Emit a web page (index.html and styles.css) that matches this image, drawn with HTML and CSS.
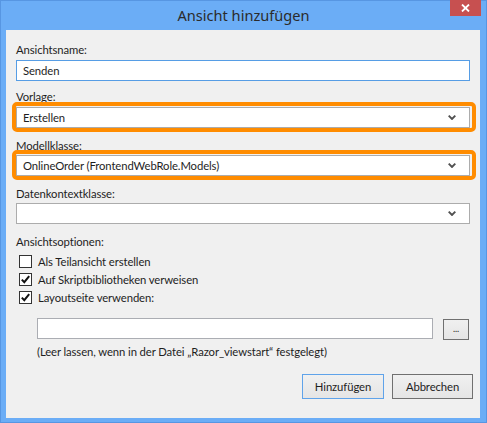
FILE: index.html
```html
<!DOCTYPE html>
<html lang="de">
<head>
<meta charset="utf-8">
<title>Ansicht hinzufügen</title>
<link rel="stylesheet" href="styles.css">
</head>
<body>
<div class="window">
  <div class="titlebar">
    <span class="spacer"></span>
    <div class="title">Ansicht hinzufügen</div>
    <div class="close">
      <svg width="9" height="8" viewBox="0 0 9 8"><path d="M1 0.5 L8 7.5 M8 0.5 L1 7.5" stroke="#fff" stroke-width="1.8" fill="none"/></svg>
    </div>
  </div>
  <div class="panel">
    <div class="lbl l-first">Ansichtsname:</div>
    <div class="textbox focused">Senden</div>

    <div class="lbl l-after-input">Vorlage:</div>
    <div class="combo hl">
      <span class="combo-text">Erstellen</span>
      <svg class="chev" width="8" height="5" viewBox="0 0 8 5"><polyline points="0.7,0.7 4,4 7.3,0.7" stroke="#505050" stroke-width="1.9" fill="none"/></svg>
    </div>

    <div class="lbl l-after-combo">Modellklasse:</div>
    <div class="combo hl">
      <span class="combo-text">OnlineOrder (FrontendWebRole.Models)</span>
      <svg class="chev" width="8" height="5" viewBox="0 0 8 5"><polyline points="0.7,0.7 4,4 7.3,0.7" stroke="#505050" stroke-width="1.9" fill="none"/></svg>
    </div>

    <div class="lbl l-after-combo">Datenkontextklasse:</div>
    <div class="combo plain">
      <span class="combo-text"></span>
      <svg class="chev" width="8" height="5" viewBox="0 0 8 5"><polyline points="0.7,0.7 4,4 7.3,0.7" stroke="#505050" stroke-width="1.9" fill="none"/></svg>
    </div>

    <div class="lbl l-after-combo">Ansichtsoptionen:</div>
    <div class="checks">
      <div class="check-row">
        <span class="box"></span>
        <span class="check-label">Als Teilansicht erstellen</span>
      </div>
      <div class="check-row">
        <span class="box"><svg width="11" height="11" viewBox="0 0 11 11"><polyline points="1.8,5.6 4.3,8.2 9.2,2.2" stroke="#111" stroke-width="2" fill="none"/></svg></span>
        <span class="check-label">Auf Skriptbibliotheken verweisen</span>
      </div>
      <div class="check-row">
        <span class="box"><svg width="11" height="11" viewBox="0 0 11 11"><polyline points="1.8,5.6 4.3,8.2 9.2,2.2" stroke="#111" stroke-width="2" fill="none"/></svg></span>
        <span class="check-label">Layoutseite verwenden:</span>
      </div>
    </div>

    <div class="path-row">
      <div class="textbox path"></div>
      <div class="btn browse">...</div>
    </div>
    <div class="note">(Leer lassen, wenn in der Datei „Razor_viewstart“ festgelegt)</div>

    <div class="actions">
      <div class="btn action default">Hinzufügen</div>
      <div class="btn action">Abbrechen</div>
    </div>
  </div>
</div>
</body>
</html>
```
FILE: styles.css
```css
html, body {
  margin: 0;
  padding: 0;
  background: #ffffff;
}

.window {
  width: 487px;
  height: 423px;
  box-sizing: border-box;
  background: #6badf6;
  border: 1px solid #5796e2;
  display: flex;
  flex-direction: column;
  font-family: Lato, "Noto Sans", sans-serif;
  color: #1e1e1e;
}

.titlebar {
  height: 29px;
  flex: none;
  display: grid;
  grid-template-columns: 1fr auto 1fr;
}

.title {
  font-family: "Noto Sans", "Open Sans", sans-serif;
  font-size: 14.6px;
  line-height: 29px;
  color: #2b2b2b;
  white-space: nowrap;
}

.close {
  justify-self: end;
  align-self: start;
  width: 31px;
  height: 16px;
  margin-top: -1px;
  margin-right: 5px;
  background: #c75050;
  display: flex;
  align-items: center;
  justify-content: center;
}

.panel {
  flex: 1;
  margin: 0 6px 4px 5px;
  background: #f0f0f0;
  padding: 12px 10px 0 10px;
  display: flex;
  flex-direction: column;
  font-size: 11.3px;
  letter-spacing: -0.1px;
}

.lbl {
  font-size: 11.3px;
  line-height: 15px;
  height: 15px;
  white-space: nowrap;
}

.l-after-input { margin-top: 8px; }
.l-after-combo { margin-top: 10px; }

.textbox {
  height: 21px;
  box-sizing: border-box;
  background: #ffffff;
  border: 1px solid #abadb3;
  padding-left: 6px;
  line-height: 19px;
  font-size: 11.3px;
  white-space: nowrap;
}

.textbox.focused {
  margin-top: 3px;
  border-color: #569de5;
}

.combo {
  position: relative;
  height: 21px;
  box-sizing: border-box;
  background: #ffffff;
  border: 1px solid #acacac;
  padding-left: 6px;
  display: flex;
  align-items: center;
  justify-content: space-between;
  margin-top: 2px;
}

.l-after-input + .combo { margin-top: 3px; }

.combo-text {
  font-size: 11.3px;
  line-height: 19px;
  white-space: nowrap;
}

.chev {
  margin-right: 13px;
  flex: none;
}

.combo.hl::before {
  content: "";
  position: absolute;
  top: -6px;
  left: -5px;
  right: -7px;
  bottom: -5px;
  border: 4px solid #ff8c00;
  border-radius: 5px;
  pointer-events: none;
}

.checks {
  margin-top: 3px;
  display: flex;
  flex-direction: column;
  padding-left: 3px;
}

.check-row {
  height: 18px;
  display: flex;
  align-items: center;
}

.box {
  width: 13px;
  height: 13px;
  box-sizing: border-box;
  border: 1px solid #333333;
  background: #ffffff;
  display: flex;
  align-items: center;
  justify-content: center;
  flex: none;
}

.check-label {
  margin-left: 6px;
  font-size: 11.3px;
  white-space: nowrap;
}

.path-row {
  margin-top: 12px;
  padding-left: 21px;
  display: flex;
  align-items: flex-start;
  gap: 10px;
}

.textbox.path {
  flex: 1;
}

.btn {
  box-sizing: border-box;
  border: 1px solid #707070;
  background: linear-gradient(#f0f0f0, #e5e5e5);
  display: flex;
  align-items: center;
  justify-content: center;
  font-size: 11.3px;
  color: #1e1e1e;
  white-space: nowrap;
}

.browse {
  width: 26px;
  height: 21px;
  margin-top: 1px;
  margin-right: 1px;
  font-size: 9px;
  padding-bottom: 2px;
}

.note {
  margin-top: 4px;
  padding-left: 21px;
  line-height: 15px;
  white-space: nowrap;
}

.actions {
  margin-top: 15px;
  margin-right: -3px;
  display: flex;
  justify-content: flex-end;
  gap: 8px;
}

.action {
  width: 81px;
  height: 25px;
}

.action.default {
  width: 82px;
  border-color: #5fa3ea;
}
```
